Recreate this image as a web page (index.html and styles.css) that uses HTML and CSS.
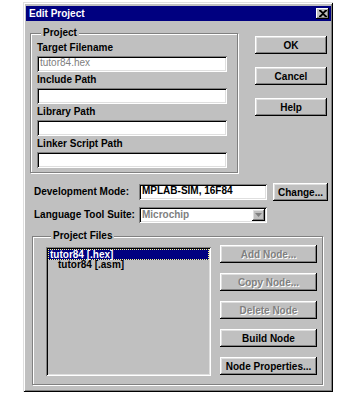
FILE: index.html
```html
<!DOCTYPE html>
<html lang="en">
<head>
    <meta charset="UTF-8">
    <meta name="viewport" content="width=device-width, initial-scale=1.0">
    <title>Edit Project</title>

    <link rel="stylesheet" href="styles.css">
</head>
<body>
    <div class="dialog">
        <div class="titlebar">
            <span class="title">Edit Project</span>
            <span class="close_button">
                <svg width="8" height="7" viewBox="0 0 8 7">
                    <path d="M0 0h2l2 2 2-2h2v1L5 3.5 8 6v1H6L4 5 2 7H0V6l3-2.5L0 1z" fill="#000"/>
                </svg>
            </span>
        </div>

        <div class="main">
            <div class="top_row">
                <fieldset class="group project_group">
                    <legend>Project</legend>
                    <div class="label">Target Filename</div>
                    <div class="textbox textbox_grey">tutor84.hex</div>
                    <div class="label">Include Path</div>
                    <div class="textbox"></div>
                    <div class="label">Library Path</div>
                    <div class="textbox"></div>
                    <div class="label">Linker Script Path</div>
                    <div class="textbox"></div>
                </fieldset>

                <div class="dialog_buttons">
                    <button class="win_button">OK</button>
                    <button class="win_button">Cancel</button>
                    <button class="win_button">Help</button>
                </div>
            </div>

            <div class="field_row">
                <span class="row_label">Development Mode:</span>
                <div class="textbox row_box">MPLAB-SIM, 16F84</div>
                <button class="win_button change_button">Change...</button>
            </div>

            <div class="field_row language_row">
                <span class="row_label">Language Tool Suite:</span>
                <div class="textbox row_box combo">
                    <span class="combo_text">Microchip</span>
                    <span class="combo_arrow">
                        <svg width="7" height="4" viewBox="0 0 7 4">
                            <path d="M0 0h7L3.5 4z" fill="#808080"/>
                        </svg>
                    </span>
                </div>
            </div>

            <fieldset class="group files_group">
                <legend>Project Files</legend>
                <div class="files_body">
                    <div class="listbox">
                        <div class="list_item selected">tutor84 [.hex]</div>
                        <div class="list_item child">tutor84 [.asm]</div>
                    </div>
                    <div class="node_buttons">
                        <button class="win_button" disabled>Add Node...</button>
                        <button class="win_button" disabled>Copy Node...</button>
                        <button class="win_button" disabled>Delete Node</button>
                        <button class="win_button">Build Node</button>
                        <button class="win_button">Node Properties...</button>
                    </div>
                </div>
            </fieldset>
        </div>
    </div>
</body>
</html>
```

FILE: styles.css
```css
body {
    margin: 0;
    background-color: #ffffff;
    font-family: "Liberation Sans", Arial, sans-serif;
    font-size: 10px;
    font-weight: bold;
    color: #000000;
}

.dialog {
    box-sizing: border-box;
    width: 310px;
    height: 390px;
    margin: 2px 0 0 23px;
    padding: 4px 2px 3px 3px;
    background-color: #c0c0c0;
    box-shadow: inset 1px 1px 0 #dfdfdf, inset -1px -1px 0 #000000,
                inset 2px 2px 0 #ffffff, inset -2px -2px 0 #808080;
}

.titlebar {
    display: flex;
    align-items: center;
    justify-content: space-between;
    height: 15px;
    padding: 0 2px 0 3px;
    background-color: #000080;
    color: #ffffff;
}

.title {
    font-size: 10px;
    line-height: 12px;
}

.close_button {
    display: flex;
    align-items: center;
    justify-content: center;
    box-sizing: border-box;
    width: 13px;
    height: 11px;
    background-color: #c0c0c0;
    box-shadow: inset -1px -1px 0 #000000, inset 1px 1px 0 #ffffff, inset -2px -2px 0 #808080;
}

.main {
    padding: 6px 0 0 4px;
}

.top_row {
    display: flex;
    align-items: flex-start;
}

/* etched group boxes */
.group {
    box-sizing: border-box;
    min-width: 0;
    margin: 0;
    border: 1px solid #808080;
    box-shadow: inset 1px 1px 0 #ffffff, 1px 1px 0 #ffffff;
}

.group legend {
    padding: 0 2px;
    margin-left: 4px;
    line-height: 12px;
    background-color: #c0c0c0;
}

.project_group {
    width: 208px;
    padding: 3px 10px 4px 6px;
}

.label {
    line-height: 12px;
    height: 12px;
    margin-bottom: 2px;
}

.textbox {
    box-sizing: border-box;
    height: 16px;
    margin-bottom: 2px;
    padding: 0 3px;
    background-color: #ffffff;
    line-height: 14px;
    white-space: nowrap;
    box-shadow: inset 1px 1px 0 #808080, inset -1px -1px 0 #ffffff,
                inset 2px 2px 0 #000000, inset -2px -2px 0 #dfdfdf;
}

.project_group .textbox:last-child {
    margin-bottom: 0;
}

.textbox_grey {
    color: #808080;
    font-weight: normal;
}

.dialog_buttons {
    display: flex;
    flex-direction: column;
    gap: 13px;
    margin-left: 17px;
    padding-top: 9px;
}

.win_button {
    box-sizing: border-box;
    width: 72px;
    height: 18px;
    padding: 0;
    border: 0;
    background-color: #c0c0c0;
    font-family: "Liberation Sans", Arial, sans-serif;
    font-size: 10px;
    font-weight: bold;
    color: #000000;
    box-shadow: inset -1px -1px 0 #000000, inset 1px 1px 0 #ffffff,
                inset -2px -2px 0 #808080, inset 2px 2px 0 #dfdfdf;
}

.win_button:disabled {
    color: #808080;
    text-shadow: 1px 1px 0 #ffffff;
}

.field_row {
    display: flex;
    align-items: center;
    height: 18px;
    margin-top: 10px;
    padding-left: 4px;
}

.language_row {
    height: 16px;
    margin-top: 6px;
}

.row_label {
    width: 105px;
    line-height: 12px;
}

.row_box {
    width: 128px;
    margin-bottom: 0;
}

.change_button {
    width: 55px;
    margin-left: 6px;
}

.combo {
    display: flex;
    align-items: center;
    justify-content: space-between;
    padding: 0 2px 0 3px;
    color: #808080;
}

.combo_arrow {
    display: flex;
    align-items: center;
    justify-content: center;
    box-sizing: border-box;
    width: 13px;
    height: 12px;
    background-color: #c0c0c0;
    box-shadow: inset -1px -1px 0 #000000, inset 1px 1px 0 #ffffff,
                inset -2px -2px 0 #808080, inset 2px 2px 0 #dfdfdf;
}

.files_group {
    width: 291px;
    margin: 7px 0 0 2px;
    padding: 3px 5px 8px 13px;
}

.files_group legend {
    margin-left: 5px;
}

.files_body {
    display: flex;
    align-items: flex-start;
}

.listbox {
    box-sizing: border-box;
    width: 165px;
    height: 129px;
    margin-top: 2px;
    padding: 2px;
    background-color: #c0c0c0;
    box-shadow: inset 1px 1px 0 #808080, inset -1px -1px 0 #ffffff,
                inset 2px 2px 0 #000000, inset -2px -2px 0 #dfdfdf;
}

.list_item {
    height: 11px;
    line-height: 10px;
    padding-left: 1px;
    white-space: nowrap;
}

.list_item.selected {
    box-sizing: border-box;
    background-color: #000080;
    color: #ffffff;
    border: 1px dotted #ffff80;
    line-height: 9px;
}

.list_item.child {
    padding-left: 10px;
}

.node_buttons {
    display: flex;
    flex-direction: column;
    gap: 10px;
    margin-left: 9px;
}

.node_buttons .win_button {
    width: 97px;
}
```
